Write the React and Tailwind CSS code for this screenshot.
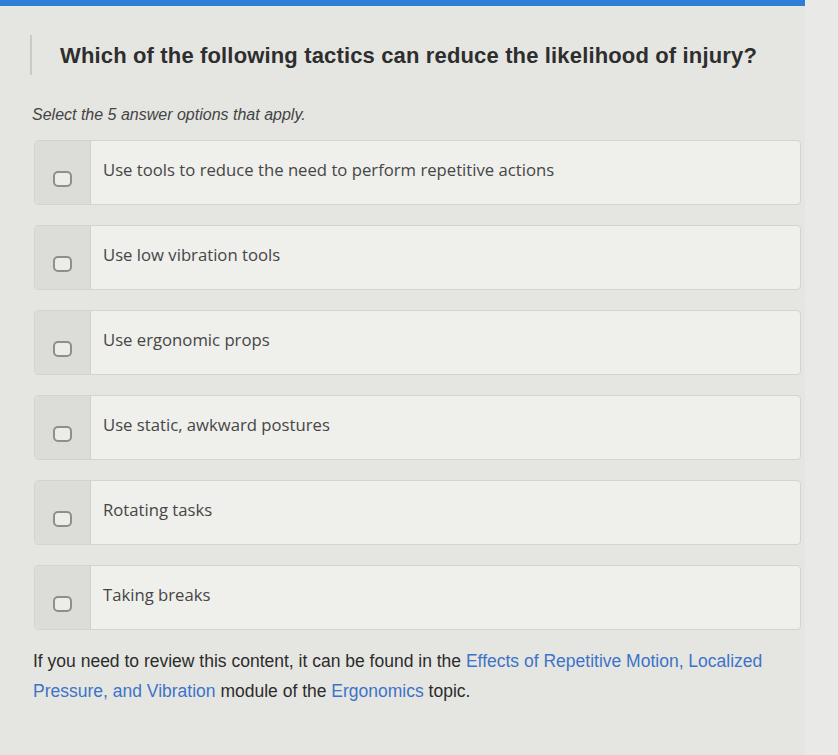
import React from "react";

const options = [
  "Use tools to reduce the need to perform repetitive actions",
  "Use low vibration tools",
  "Use ergonomic props",
  "Use static, awkward postures",
  "Rotating tasks",
  "Taking breaks",
];

function Option({ label }) {
  return (
    <div className="flex h-[65px] rounded-[4px] border border-[#d3d3d0] bg-[#efefec] overflow-hidden">
      <div className="w-[56px] shrink-0 flex items-center justify-center bg-[#dcdcd9] border-r border-[#d0d0cd]">
        <div className="mt-[12px] w-[19px] h-[16px] rounded-[5px] border-2 border-[#8e8e8c] bg-[#ecece9]" />
      </div>
      <div className="flex items-center pl-[12px] pb-[6px] text-[16.7px] text-[#464646] font-['Open_Sans',sans-serif]">
        {label}
      </div>
    </div>
  );
}

export default function App() {
  return (
    <div className="w-[838px] h-[755px] flex bg-[#e5e6e2] overflow-hidden">
      <div className="w-[805px] flex flex-col">
        <div className="h-[6px] bg-[#2f7fd8]" />
        <div className="flex items-center mt-[29px] ml-[30px] h-[40px] border-l-2 border-[#cacac7]">
          <h1 className="ml-[28px] text-[22px] font-bold text-[#2e2e2e] font-['Liberation_Sans',Arial,sans-serif] tracking-[0.15px]">
            Which of the following tactics can reduce the likelihood of injury?
          </h1>
        </div>
        <p className="mt-[28px] ml-[32px] text-[16px] italic text-[#444] font-['Liberation_Sans',Arial,sans-serif]">
          Select the 5 answer options that apply.
        </p>
        <div className="mt-[13px] ml-[34px] mr-[4px] flex flex-col gap-[20px]">
          {options.map((o) => (
            <Option key={o} label={o} />
          ))}
        </div>
        <p className="mt-[16px] ml-[33px] text-[17.5px] leading-[30px] text-[#2c2c2c] font-['Liberation_Sans',Arial,sans-serif] whitespace-nowrap">
          If you need to review this content, it can be found in the{" "}
          <span className="text-[#3d73c8]">Effects of Repetitive Motion, Localized</span>
          <br />
          <span className="text-[#3d73c8]">Pressure, and Vibration</span> module of the{" "}
          <span className="text-[#3d73c8]">Ergonomics</span> topic.
        </p>
      </div>
      <div className="flex-1 bg-[#e9e9e7]" />
    </div>
  );
}
